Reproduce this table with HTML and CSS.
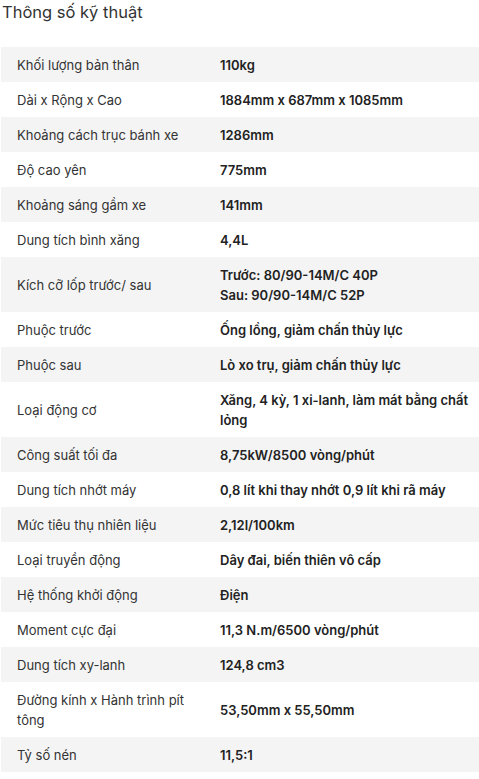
FILE: index.html
```html
<!DOCTYPE html>
<html lang="vi">
<head>
<meta charset="utf-8">
<link rel="stylesheet" href="styles.css">
</head>
<body>
<section class="specs">
  <h2 class="specs-title">Thông số kỹ thuật</h2>
  <table class="spec-table">
    <tbody>
      <tr><td class="label">Khối lượng bản thân</td><td class="value">110kg</td></tr>
      <tr><td class="label">Dài x Rộng x Cao</td><td class="value">1884mm x 687mm x 1085mm</td></tr>
      <tr><td class="label">Khoảng cách trục bánh xe</td><td class="value">1286mm</td></tr>
      <tr><td class="label">Độ cao yên</td><td class="value">775mm</td></tr>
      <tr><td class="label">Khoảng sáng gầm xe</td><td class="value">141mm</td></tr>
      <tr><td class="label">Dung tích bình xăng</td><td class="value">4,4L</td></tr>
      <tr><td class="label">Kích cỡ lốp trước/ sau</td><td class="value">Trước: 80/90-14M/C 40P<br>Sau: 90/90-14M/C 52P</td></tr>
      <tr><td class="label">Phuộc trước</td><td class="value">Ống lồng, giảm chấn thủy lực</td></tr>
      <tr><td class="label">Phuộc sau</td><td class="value">Lò xo trụ, giảm chấn thủy lực</td></tr>
      <tr><td class="label">Loại động cơ</td><td class="value">Xăng, 4 kỳ, 1 xi-lanh, làm mát bằng chất lỏng</td></tr>
      <tr><td class="label">Công suất tối đa</td><td class="value">8,75kW/8500 vòng/phút</td></tr>
      <tr><td class="label">Dung tích nhớt máy</td><td class="value">0,8 lít khi thay nhớt 0,9 lít khi rã máy</td></tr>
      <tr><td class="label">Mức tiêu thụ nhiên liệu</td><td class="value">2,12l/100km</td></tr>
      <tr><td class="label">Loại truyền động</td><td class="value">Dây đai, biến thiên vô cấp</td></tr>
      <tr><td class="label">Hệ thống khởi động</td><td class="value">Điện</td></tr>
      <tr><td class="label">Moment cực đại</td><td class="value">11,3 N.m/6500 vòng/phút</td></tr>
      <tr><td class="label">Dung tích xy-lanh</td><td class="value">124,8 cm3</td></tr>
      <tr><td class="label">Đường kính x Hành trình pít tông</td><td class="value">53,50mm x 55,50mm</td></tr>
      <tr><td class="label">Tỷ số nén</td><td class="value">11,5:1</td></tr>
    </tbody>
  </table>
</section>
</body>
</html>
```
FILE: styles.css
```css
* { box-sizing: border-box; }
html, body { margin: 0; padding: 0; background: #fff; }
body {
  font-family: Inter, "Noto Sans", sans-serif;
  color: #333;
}
.specs { padding: 0 0 0 1px; }
.specs-title {
  margin: 0;
  padding: 0 0 0 1px;
  font-size: 16.5px;
  line-height: 24px;
  font-weight: 400;
  color: #333;
  height: 47px;
}
.spec-table {
  width: 100%;
  border-collapse: collapse;
  table-layout: fixed;
}
.spec-table tr:nth-child(odd) { background: #f4f4f4; }
.spec-table td {
  font-size: 13px;
  line-height: 20px;
  padding: 8px 0 7px;
  vertical-align: middle;
}
.label {
  width: 203px;
  padding-left: 16px !important;
  padding-right: 14px !important;
  color: #333;
}
.value {
  padding-left: 16px !important;
  padding-right: 8px !important;
  font-weight: 600;
  color: #222;
}
```
